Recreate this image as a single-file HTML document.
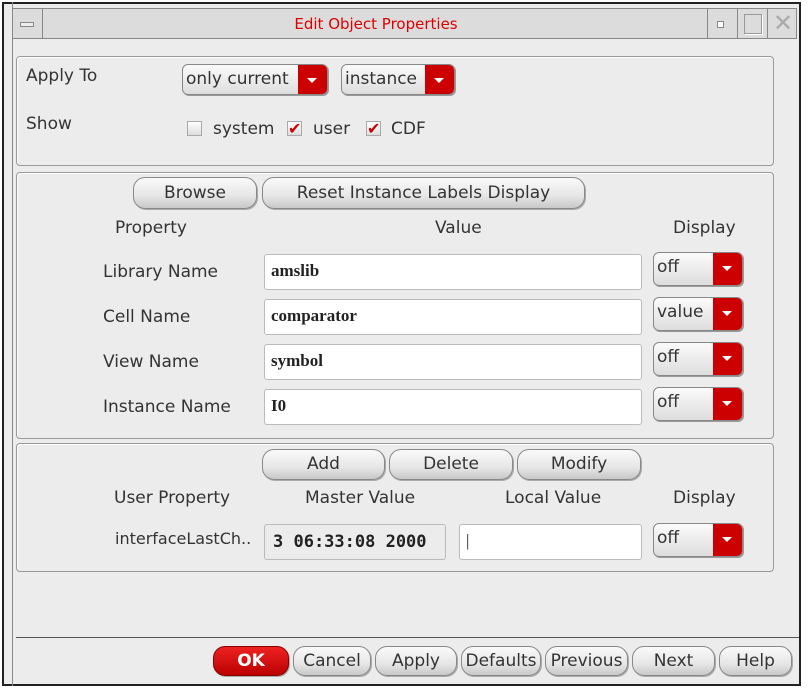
<!DOCTYPE html><html><head><style>
body{margin:0;width:810px;height:689px;background:#fff;position:relative;overflow:hidden;font-family:"DejaVu Sans","Liberation Sans",sans-serif;font-size:17px;color:#333}
.a{position:absolute}
.win{left:2px;top:2px;width:799px;height:684px;background:#ececec;border:2px solid #222;box-sizing:border-box}
.panel{border:1px solid #999;border-radius:4px;box-shadow:inset 1px 1px 0 #fff}
.btn{background:linear-gradient(#fafafa,#e6e6e6 60%,#c8c8c8);border:1px solid #888;border-radius:12px;box-sizing:border-box;text-align:center;color:#333;box-shadow:1px 1px 0 #aaa}
.dd{background:linear-gradient(#fbfbfb,#ddd);border:1px solid #888;border-radius:6px;box-sizing:border-box;overflow:hidden;box-shadow:1px 1px 0 #999}
.dd span{position:absolute;left:3px;top:4px}
.dd i{position:absolute;right:0;top:0;bottom:0;width:29px;background:#c00}
.dd i:after{content:"";position:absolute;left:9px;top:13px;border:5px solid transparent;border-top:5px solid #fff}
.in{background:#fff;border:1px solid #bbb;border-radius:3px;box-sizing:border-box;font-family:"Liberation Serif","DejaVu Serif",serif;font-weight:bold;font-size:17px;color:#222;padding:6px 6px}
.cb{width:15px;height:15px;border:1px solid #aaa;background:linear-gradient(#fff,#ddd);box-sizing:border-box}
.ck{color:#c00;font-size:16px;font-weight:bold;line-height:14px}
</style></head><body>
<div class="a win"></div>
<div class="a" style="left:12px;top:2px;width:1px;height:684px;background:#888"></div>
<div class="a" style="left:12px;top:8px;width:785px;height:31px;background:#dcdcdc;border:1px solid #888;box-sizing:border-box"></div>
<div class="a" style="left:12px;top:8px;width:30px;height:31px;border-right:1px solid #888"></div>
<div class="a" style="left:20px;top:22px;width:12px;height:3px;border:1px solid #888;background:#eee"></div>
<div class="a" style="left:0;width:752px;top:15px;text-align:center;color:#d00;font-size:15px">Edit Object Properties</div>
<div class="a" style="left:707px;top:8px;width:30px;height:31px;border-left:1px solid #888"></div>
<div class="a" style="left:717px;top:21px;width:5px;height:5px;border:1px solid #888;background:#fff"></div>
<div class="a" style="left:737px;top:8px;width:30px;height:31px;border-left:1px solid #888"></div>
<div class="a" style="left:744px;top:14px;width:16px;height:18px;border:1px solid #999;box-shadow:1px 1px 0 #fff"></div>
<div class="a" style="left:767px;top:8px;width:30px;height:31px;border-left:1px solid #888;color:#aaa;font-size:24px;text-align:center;line-height:31px">✕</div>

<div class="a panel" style="left:16px;top:56px;width:756px;height:108px"></div>
<div class="a" style="left:26px;top:66px">Apply To</div>
<div class="a" style="left:26px;top:114px">Show</div>
<div class="a dd" style="left:182px;top:64px;width:146px;height:31px"><span>only current</span><i></i></div>
<div class="a dd" style="left:341px;top:64px;width:114px;height:31px"><span>instance</span><i></i></div>
<div class="a cb" style="left:187px;top:121px"></div><div class="a" style="left:213px;top:119px">system</div>
<div class="a cb" style="left:287px;top:121px"></div><div class="a ck" style="left:288px;top:122px">✔</div><div class="a" style="left:313px;top:119px">user</div>
<div class="a cb" style="left:366px;top:121px"></div><div class="a ck" style="left:367px;top:122px">✔</div><div class="a" style="left:391px;top:119px">CDF</div>

<div class="a panel" style="left:16px;top:172px;width:756px;height:265px"></div>
<div class="a btn" style="left:133px;top:177px;width:124px;height:32px;padding-top:5px">Browse</div>
<div class="a btn" style="left:262px;top:177px;width:323px;height:32px;padding-top:5px">Reset Instance Labels Display</div>
<div class="a" style="left:115px;top:218px">Property</div>
<div class="a" style="left:435px;top:218px">Value</div>
<div class="a" style="left:673px;top:218px">Display</div>

<div class="a" style="left:103px;top:262px">Library Name</div>
<div class="a" style="left:103px;top:307px">Cell Name</div>
<div class="a" style="left:103px;top:352px">View Name</div>
<div class="a" style="left:103px;top:397px">Instance Name</div>
<div class="a in" style="left:264px;top:254px;width:378px;height:36px">amslib</div>
<div class="a in" style="left:264px;top:299px;width:378px;height:36px">comparator</div>
<div class="a in" style="left:264px;top:344px;width:378px;height:36px">symbol</div>
<div class="a in" style="left:264px;top:389px;width:378px;height:36px">I0</div>
<div class="a dd" style="left:653px;top:252px;width:90px;height:34px"><span>off</span><i></i></div>
<div class="a dd" style="left:653px;top:297px;width:90px;height:34px"><span>value</span><i></i></div>
<div class="a dd" style="left:653px;top:342px;width:90px;height:34px"><span>off</span><i></i></div>
<div class="a dd" style="left:653px;top:387px;width:90px;height:34px"><span>off</span><i></i></div>

<div class="a panel" style="left:16px;top:443px;width:756px;height:127px"></div>
<div class="a btn" style="left:262px;top:449px;width:123px;height:31px;padding-top:4px">Add</div>
<div class="a btn" style="left:389px;top:449px;width:124px;height:31px;padding-top:4px">Delete</div>
<div class="a btn" style="left:517px;top:449px;width:124px;height:31px;padding-top:4px">Modify</div>
<div class="a" style="left:114px;top:488px">User Property</div>
<div class="a" style="left:305px;top:488px">Master Value</div>
<div class="a" style="left:505px;top:488px">Local Value</div>
<div class="a" style="left:673px;top:488px">Display</div>
<div class="a" style="left:115px;top:529px;font-size:16px">interfaceLastCh..</div>
<div class="a in" style="left:264px;top:524px;width:182px;height:36px;background:#ececec;font-family:'DejaVu Sans Mono',monospace;font-size:17px;padding:7px 8px">3 06:33:08 2000</div>
<div class="a in" style="left:459px;top:524px;width:183px;height:36px;font-weight:normal">|</div>
<div class="a dd" style="left:653px;top:523px;width:90px;height:34px"><span>off</span><i></i></div>

<div class="a" style="left:16px;top:637px;width:783px;border-top:1px solid #555"></div>
<div class="a btn" style="left:213px;top:646px;width:76px;height:30px;background:linear-gradient(#e22,#b00);border-color:#800;color:#fff;font-weight:bold;padding-top:4px">OK</div>
<div class="a btn" style="left:293px;top:646px;width:78px;height:30px;padding-top:4px">Cancel</div>
<div class="a btn" style="left:375px;top:646px;width:82px;height:30px;padding-top:4px">Apply</div>
<div class="a btn" style="left:461px;top:646px;width:80px;height:30px;padding-top:4px">Defaults</div>
<div class="a btn" style="left:545px;top:646px;width:83px;height:30px;padding-top:4px">Previous</div>
<div class="a btn" style="left:632px;top:646px;width:83px;height:30px;padding-top:4px">Next</div>
<div class="a btn" style="left:719px;top:646px;width:73px;height:30px;padding-top:4px">Help</div>
</body></html>
